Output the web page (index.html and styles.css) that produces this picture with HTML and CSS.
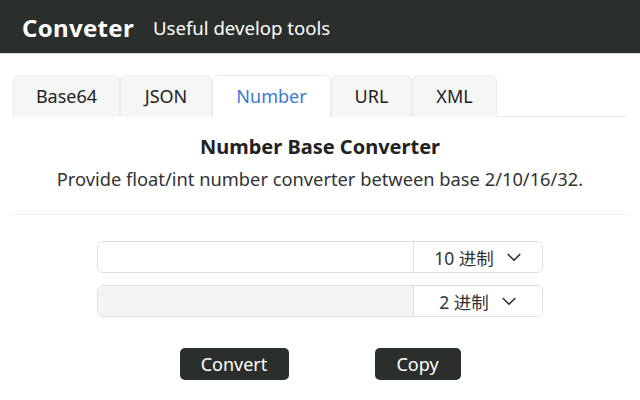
FILE: index.html
```html
<!DOCTYPE html>
<html>
<head>
<meta charset="utf-8">
<link rel="stylesheet" href="styles.css">
</head>
<body>
<header class="header">
  <span class="brand">Conveter</span>
  <span class="tagline">Useful develop tools</span>
</header>
<main class="main">
  <nav class="tabs">
    <div class="tab">Base64</div>
    <div class="tab">JSON</div>
    <div class="tab active">Number</div>
    <div class="tab">URL</div>
    <div class="tab">XML</div>
  </nav>
  <section class="intro">
    <h1 class="title">Number Base Converter</h1>
    <p class="desc">Provide float/int number converter between base 2/10/16/32.</p>
  </section>
  <div class="form">
    <div class="group">
      <div class="field"></div>
      <div class="select">10 进制 <svg class="chev" viewBox="0 0 16 10" width="16" height="9"><path d="M1 1l7 7 7-7" fill="none" stroke="#222" stroke-width="1.5"/></svg></div>
    </div>
    <div class="group">
      <div class="field disabled"></div>
      <div class="select">2 进制 <svg class="chev" viewBox="0 0 16 10" width="16" height="9"><path d="M1 1l7 7 7-7" fill="none" stroke="#222" stroke-width="1.5"/></svg></div>
    </div>
  </div>
  <div class="actions">
    <button class="btn convert">Convert</button>
    <button class="btn copy">Copy</button>
  </div>
</main>
</body>
</html>
```
FILE: styles.css
```css
* { box-sizing: border-box; }
body {
  margin: 0;
  font-family: "Noto Sans", "Open Sans", "Noto Sans CJK SC", sans-serif;
  color: #222;
  background: #fff;
}
.header {
  height: 54px;
  background: #2b2f2c;
  display: flex;
  align-items: center;
  padding-left: 22px;
  padding-top: 2px;
  color: #fff;
  border-bottom: 1px solid #d8d8d8;
}
.brand {
  font-size: 24px;
  font-weight: 700;
  margin-right: 19px;
  letter-spacing: 0.3px;
}
.tagline {
  font-size: 18.6px;
}
.main {
  padding: 21px 13px 0;
}
.tabs {
  display: flex;
  border-bottom: 1px solid #ececec;
  height: 42px;
}
.tab {
  height: 42px;
  display: flex;
  align-items: center;
  justify-content: center;
  padding-bottom: 2px;
  font-size: 18px;
  color: #222;
  background: #f6f6f6;
  border: 1px solid #ececec;
  border-bottom: none;
  border-radius: 6px 6px 0 0;
}
.tab:nth-child(1) { width: 107px; }
.tab:nth-child(2) { width: 92px; }
.tab:nth-child(3) { width: 119px; }
.tab:nth-child(4) { width: 81px; }
.tab:nth-child(5) { width: 85px; }
.tab.active {
  background: #fff;
  color: #3b78d8;
  height: 43px;
  margin-bottom: -1px;
  padding-bottom: 3px;
}
.intro {
  text-align: center;
  border-bottom: 1px solid #f0f0f0;
  padding-top: 17px;
  padding-bottom: 23px;
}
.title {
  margin: 0;
  font-size: 20px;
  font-weight: 700;
  line-height: 26px;
}
.desc {
  margin: 7px 0 0;
  font-size: 18.3px;
  line-height: 24px;
  color: #333;
}
.form {
  display: flex;
  flex-direction: column;
  align-items: center;
  gap: 12px;
  padding-top: 26px;
}
.group {
  width: 446px;
  height: 32px;
  display: flex;
  border: 1px solid #dedede;
  border-radius: 6px;
  overflow: hidden;
}
.field {
  flex: 1;
  background: #fff;
}
.field.disabled {
  background: #f4f4f4;
}
.select {
  width: 129px;
  border-left: 1px solid #dedede;
  background: #fff;
  display: flex;
  align-items: center;
  justify-content: center;
  gap: 12px;
  font-size: 17.5px;
  color: #333;
}
.actions {
  display: flex;
  justify-content: center;
  gap: 86px;
  padding-top: 31px;
}
.btn {
  height: 32px;
  background: #2b2f2c;
  color: #fff;
  border: none;
  border-radius: 5px;
  font-family: inherit;
  font-size: 18px;
}
.convert { width: 109px; }
.copy { width: 86px; }
```
